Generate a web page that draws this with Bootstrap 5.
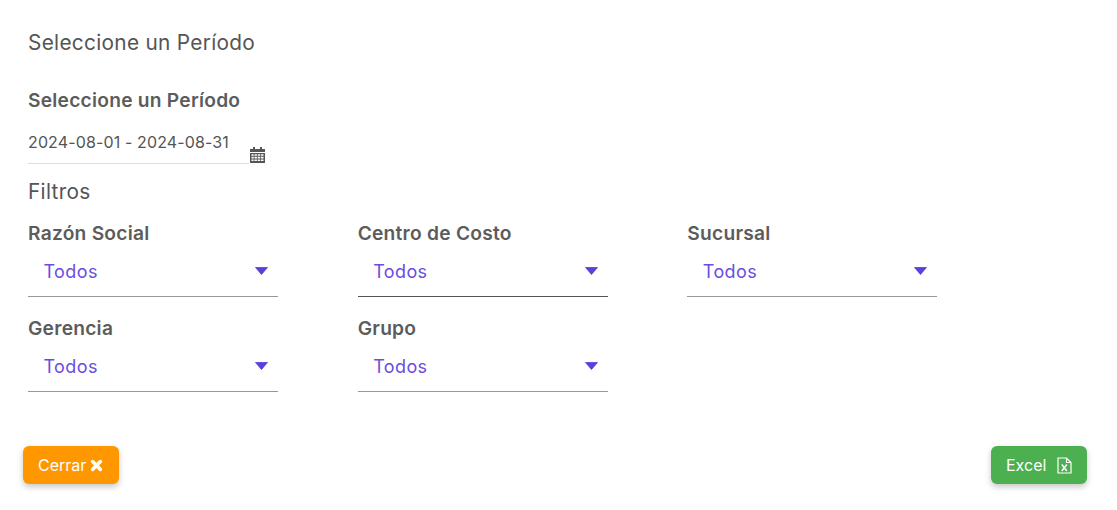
<!DOCTYPE html>
<html lang="es">
<head>
<meta charset="utf-8">
<title>Seleccione un Período</title>
<link href="https://cdn.jsdelivr.net/npm/bootstrap@5.3.0/dist/css/bootstrap.min.css" rel="stylesheet">
<style>
html,body{height:100%;}
body{font-family:"Inter",sans-serif;color:#555;background:#fff;overflow:hidden;}
.shell{height:510px;padding:0 30px 0 28px;}
.main-title{font-size:20.8px;line-height:24px;font-weight:400;letter-spacing:.3px;margin:0;padding-top:31px;color:#555;}
.field-label{font-size:19.2px;line-height:22px;font-weight:600;letter-spacing:.24px;color:#5c5c5c;margin:0;}
.period-label{margin-top:34px;}
.date-wrap{margin-top:18px;width:237px;}
.date-text{width:221px;height:35px;border-bottom:1px solid #ddd;font-size:16px;line-height:20px;letter-spacing:.13px;color:#555;padding-top:3px;white-space:nowrap;flex:none;}
.cal-icon{width:15px;height:16px;margin-left:1px;margin-top:18px;flex:none;}
.filter-title{font-size:20.8px;line-height:24px;font-weight:400;letter-spacing:.3px;margin:16px 0 0;color:#555;}
.filter-grid{width:989px;margin:0;--bs-gutter-x:0;--bs-gutter-y:0;}
.filter-cell{height:95px;padding-top:18px;}
.pick{width:250px;height:49px;margin-top:4px;border-bottom:1px solid #999;color:#6a4de0;font-size:18px;line-height:22px;letter-spacing:.4px;padding:0 10px 0 15.5px;}
.pick span{margin-top:-1px;}
.pick-dark{border-bottom-color:#555;}
.caret-mark{width:13px;height:8px;fill:#5b3fdc;flex:none;margin-top:-3px;}
.foot{margin-top:52px;}
.act{height:38px;border:0;border-radius:6px;color:#fff;font-size:16px;line-height:20px;padding:0 15px;box-shadow:0 3px 6px rgba(0,0,0,.22);}
.act-close{background:#ff9800;width:96px;margin-left:-5px;}
.act-excel{background:#4caf50;width:96px;}
.act-close:hover,.act-close:focus{background:#ff9800;color:#fff;}
.act-excel:hover,.act-excel:focus{background:#4caf50;color:#fff;}
</style>
</head>
<body>
<div class="shell">
  <h5 class="main-title">Seleccione un Período</h5>
  <p class="field-label period-label">Seleccione un Período</p>
  <div class="date-wrap d-flex">
    <div class="date-text">2024-08-01 - 2024-08-31</div>
    <svg class="cal-icon" viewBox="0 0 15 16" aria-hidden="true"><path fill="#555" d="M3 0h2v2h5V0h2v2h3v3H0V2h3zM0 6h15v10H0zm1.5 1.2v1.6h2.2V7.2zm3 0v1.6h2.4V7.2zm3.2 0v1.6h2.4V7.2zm3.2 0v1.6h2.6V7.2zM1.5 9.8v1.6h2.2V9.8zm3 0v1.6h2.4V9.8zm3.2 0v1.6h2.4V9.8zm3.2 0v1.6h2.6V9.8zM1.5 12.4V14h2.2v-1.6zm3 0V14h2.4v-1.6zm3.2 0V14h2.4v-1.6zm3.2 0V14h2.6v-1.6z"/></svg>
  </div>
  <h5 class="filter-title">Filtros</h5>
  <div class="row filter-grid">
    <div class="col-4 filter-cell">
      <p class="field-label">Razón Social</p>
      <div class="pick d-flex align-items-center justify-content-between"><span>Todos</span><svg class="caret-mark" viewBox="0 0 13 8"><path d="M.5.5h12L6.5 7.5z" stroke="#5b3fdc" stroke-width=".8" stroke-linejoin="round"/></svg></div>
    </div>
    <div class="col-4 filter-cell">
      <p class="field-label">Centro de Costo</p>
      <div class="pick pick-dark d-flex align-items-center justify-content-between"><span>Todos</span><svg class="caret-mark" viewBox="0 0 13 8"><path d="M.5.5h12L6.5 7.5z" stroke="#5b3fdc" stroke-width=".8" stroke-linejoin="round"/></svg></div>
    </div>
    <div class="col-4 filter-cell">
      <p class="field-label">Sucursal</p>
      <div class="pick d-flex align-items-center justify-content-between"><span>Todos</span><svg class="caret-mark" viewBox="0 0 13 8"><path d="M.5.5h12L6.5 7.5z" stroke="#5b3fdc" stroke-width=".8" stroke-linejoin="round"/></svg></div>
    </div>
    <div class="col-4 filter-cell">
      <p class="field-label">Gerencia</p>
      <div class="pick d-flex align-items-center justify-content-between"><span>Todos</span><svg class="caret-mark" viewBox="0 0 13 8"><path d="M.5.5h12L6.5 7.5z" stroke="#5b3fdc" stroke-width=".8" stroke-linejoin="round"/></svg></div>
    </div>
    <div class="col-4 filter-cell">
      <p class="field-label">Grupo</p>
      <div class="pick d-flex align-items-center justify-content-between"><span>Todos</span><svg class="caret-mark" viewBox="0 0 13 8"><path d="M.5.5h12L6.5 7.5z" stroke="#5b3fdc" stroke-width=".8" stroke-linejoin="round"/></svg></div>
    </div>
  </div>
  <div class="foot d-flex justify-content-between">
    <button type="button" class="btn act act-close d-inline-flex align-items-center gap-1">Cerrar <svg width="13" height="13" viewBox="0 0 13 13" aria-hidden="true"><path fill="none" stroke="#fff" stroke-width="3.6" stroke-linecap="round" d="M2.6 2.6l7.8 7.8M10.4 2.6l-7.8 7.8"/></svg></button>
    <button type="button" class="btn act act-excel d-inline-flex align-items-center justify-content-between">Excel <svg width="15" height="17" viewBox="0 0 15 17" aria-hidden="true"><path fill="none" stroke="#fff" stroke-width="1.2" d="M1 1h8.5L14 5.5V16H1zM9.5 1v4.5H14"/><path fill="none" stroke="#fff" stroke-width="1.5" d="M4.8 7.5l5 6.5M9.8 7.5l-5 6.5"/></svg></button>
  </div>
</div>
<script src="https://cdn.jsdelivr.net/npm/bootstrap@5.3.0/dist/js/bootstrap.bundle.min.js"></script>
</body>
</html>
